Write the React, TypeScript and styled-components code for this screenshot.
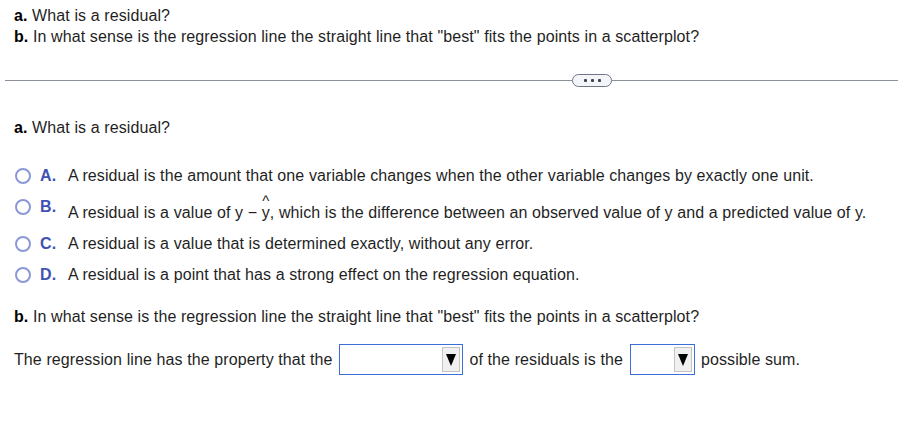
import React from "react";
import styled, { createGlobalStyle } from "styled-components";

const Global = createGlobalStyle`
  html, body { margin: 0; padding: 0; background: #fff; }
  body { font-family: Arial, "Liberation Sans", sans-serif; font-size: 16px; color: #1f1f1f; letter-spacing: 0.1px; }
`;

const Page = styled.div`
  width: 903px;
  height: 435px;
  box-sizing: border-box;
  display: flex;
  flex-direction: column;
`;

const Header = styled.div`
  padding: 5px 14px 0;
  line-height: 21px;
`;

const Line = styled.div``;

const Bold = styled.b`
  font-weight: bold;
  color: #000;
`;

const Divider = styled.div`
  margin: 27px 5px 0;
  height: 13px;
  display: grid;
  grid-template-columns: 567px 40px 1fr;
  align-items: center;
  &::before, &::after {
    content: "";
    height: 1px;
    background: #8c929c;
  }
`;

const Pill = styled.div`
  height: 13px;
  box-sizing: border-box;
  border: 1px solid #6e7584;
  border-radius: 7px;
  background: #f3f5f8;
  display: flex;
  align-items: center;
  justify-content: center;
  gap: 4px;
`;

const Dot = styled.span`
  width: 3px;
  height: 3px;
  background: #3c4252;
  border-radius: 1px;
`;

const Body = styled.div`
  padding: 0 14px;
`;

const Question = styled.div<{ $mt: number }>`
  margin-top: ${(p) => p.$mt}px;
  line-height: 20px;
`;

const Options = styled.div`
  margin-top: 28px;
  display: flex;
  flex-direction: column;
`;

const Option = styled.div<{ $mt: number; $lift?: number }>`
  display: flex;
  align-items: flex-end;
  margin-top: ${(p) => p.$mt}px;
  line-height: 20px;
  --lift: ${(p) => p.$lift ?? 0}px;
`;

const Radio = styled.span`
  width: 16px;
  height: 16px;
  border: 2px solid #8a98d8;
  border-radius: 50%;
  box-sizing: border-box;
  margin: 0 0 calc(2px + var(--lift)) 1px;
  flex: none;
`;

const Letter = styled.span`
  font-weight: bold;
  color: #3f51b5;
  width: 28px;
  margin-left: 9px;
  margin-bottom: var(--lift);
  flex: none;
`;

const OptText = styled.span`
  color: #1f1f1f;
`;

const Hat = styled.span`
  position: relative;
  display: inline-block;
  &::before {
    content: "^";
    position: absolute;
    left: 0;
    right: 0;
    top: -12px;
    text-align: center;
    font-size: 15px;
  }
`;

const Fill = styled.div`
  margin-top: 17px;
  display: flex;
  align-items: center;
  height: 31px;
`;

const Select = styled.div<{ $w: number }>`
  width: ${(p) => p.$w}px;
  height: 31px;
  box-sizing: border-box;
  border: 1px solid #3a6fd8;
  display: flex;
  justify-content: flex-end;
  align-items: center;
  padding-right: 2px;
  margin: 0 6px 0 7px;
  flex: none;
`;

const Arrow = styled.span`
  width: 18px;
  height: 25px;
  box-sizing: border-box;
  background: #f0f0f0;
  border: 1px solid #c4c4c4;
  display: flex;
  align-items: center;
  justify-content: center;
  &::after {
    content: "";
    border-left: 5px solid transparent;
    border-right: 5px solid transparent;
    border-top: 12px solid #000;
  }
`;

export default function App() {
  return (
    <Page>
      <Global />
      <Header>
        <Line>
          <Bold>a.</Bold> What is a residual?
        </Line>
        <Line>
          <Bold>b.</Bold> In what sense is the regression line the straight line that "best" fits the points in a scatterplot?
        </Line>
      </Header>
      <Divider>
        <Pill>
          <Dot />
          <Dot />
          <Dot />
        </Pill>
      </Divider>
      <Body>
        <Question $mt={31}>
          <Bold>a.</Bold> What is a residual?
        </Question>
        <Options>
          <Option $mt={0}>
            <Radio />
            <Letter>A.</Letter>
            <OptText>A residual is the amount that one variable changes when the other variable changes by exactly one unit.</OptText>
          </Option>
          <Option $mt={11} $lift={6}>
            <Radio />
            <Letter>B.</Letter>
            <OptText>
              A residual is a value of y − <Hat>y</Hat>, which is the difference between an observed value of y and a predicted value of y.
            </OptText>
          </Option>
          <Option $mt={11}>
            <Radio />
            <Letter>C.</Letter>
            <OptText>A residual is a value that is determined exactly, without any error.</OptText>
          </Option>
          <Option $mt={11}>
            <Radio />
            <Letter>D.</Letter>
            <OptText>A residual is a point that has a strong effect on the regression equation.</OptText>
          </Option>
        </Options>
        <Question $mt={22}>
          <Bold>b.</Bold> In what sense is the regression line the straight line that "best" fits the points in a scatterplot?
        </Question>
        <Fill>
          <span>The regression line has the property that the</span>
          <Select $w={124}>
            <Arrow />
          </Select>
          <span>of the residuals is the</span>
          <Select $w={65}>
            <Arrow />
          </Select>
          <span>possible sum.</span>
        </Fill>
      </Body>
    </Page>
  );
}
